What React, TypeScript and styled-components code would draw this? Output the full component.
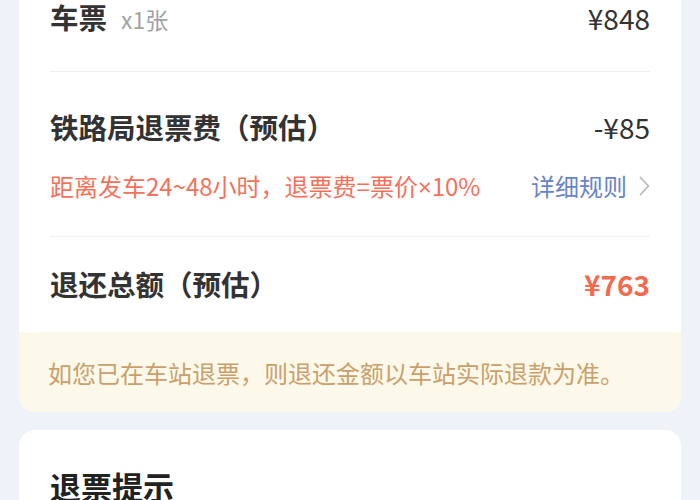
import React from "react";
import styled, { createGlobalStyle } from "styled-components";

const GlobalStyle = createGlobalStyle`
  html, body {
    margin: 0;
    padding: 0;
    background: #eff2f8;
    font-family: "Noto Sans CJK SC", "Noto Sans", sans-serif;
    overflow: hidden;
  }
`;

const Page = styled.div`
  width: 700px;
  height: 500px;
  padding: 0 19px;
  box-sizing: border-box;
  display: flex;
  flex-direction: column;
  gap: 18px;
`;

const Card = styled.div<{ $top?: boolean }>`
  background: #ffffff;
  border-radius: ${(p) => (p.$top ? "0 0 16px 16px" : "16px")};
  overflow: hidden;
  flex-shrink: 0;
`;

const Section = styled.div<{ $pad: string; $last?: boolean }>`
  margin: 0 31px;
  padding: ${(p) => p.$pad};
  border-bottom: ${(p) => (p.$last ? "none" : "1px solid #f0f0f0")};
`;

const Row = styled.div`
  display: flex;
  align-items: center;
  justify-content: space-between;
  height: 36px;
`;

const Label = styled.div`
  display: flex;
  align-items: baseline;
  font-size: 28.5px;
  font-weight: 700;
  color: #333333;
  line-height: 32px;
`;

const Count = styled.span`
  margin-left: 14px;
  font-size: 23px;
  font-weight: 400;
  color: #a3a3a3;
`;

const Price = styled.div<{ $accent?: boolean }>`
  font-size: 28px;
  line-height: 32px;
  font-weight: ${(p) => (p.$accent ? 700 : 400)};
  color: ${(p) => (p.$accent ? "#f46a4f" : "#333333")};
`;

const SubRow = styled.div`
  display: flex;
  align-items: center;
  justify-content: space-between;
  margin-top: 26px;
  height: 30px;
`;

const Warn = styled.div`
  font-size: 24px;
  color: #f2725c;
  line-height: 30px;
`;

const Times = styled.span`
  font-family: "Noto Sans", sans-serif;
`;

const RuleLink = styled.div`
  display: flex;
  align-items: center;
  gap: 12px;
  font-size: 24px;
  color: #6884c9;
  line-height: 30px;
`;

const Notice = styled.div`
  height: 80px;
  background: #fdf9ea;
  display: flex;
  align-items: center;
  padding: 0 29px;
  font-size: 24px;
  color: #c9a06c;
`;

const TipTitle = styled.div`
  margin: 36px 31px 0;
  font-size: 31px;
  font-weight: 700;
  color: #222222;
  line-height: 40px;
`;

const Chevron = () => (
  <svg width="11" height="20" viewBox="0 0 11 20">
    <polyline
      points="1.5,1.5 9.5,10 1.5,18.5"
      fill="none"
      stroke="#b9b9c0"
      strokeWidth="1.8"
      strokeLinecap="round"
      strokeLinejoin="round"
    />
  </svg>
);

export default function App() {
  return (
    <>
      <GlobalStyle />
      <Page>
        <Card $top>
          <Section $pad="0 0 35px">
            <Row>
              <Label>
                车票<Count>x1张</Count>
              </Label>
              <Price>¥848</Price>
            </Row>
          </Section>
          <Section $pad="37px 0 35px">
            <Row>
              <Label>铁路局退票费（预估）</Label>
              <Price>-¥85</Price>
            </Row>
            <SubRow>
              <Warn>
                距离发车24~48小时，退票费=票价<Times>×</Times>10%
              </Warn>
              <RuleLink>
                详细规则
                <Chevron />
              </RuleLink>
            </SubRow>
          </Section>
          <Section $pad="29px 0 30px" $last>
            <Row>
              <Label>退还总额（预估）</Label>
              <Price $accent>¥763</Price>
            </Row>
          </Section>
          <Notice>如您已在车站退票，则退还金额以车站实际退款为准。</Notice>
        </Card>
        <Card>
          <TipTitle>退票提示</TipTitle>
          <div style={{ height: 60 }} />
        </Card>
      </Page>
    </>
  );
}
